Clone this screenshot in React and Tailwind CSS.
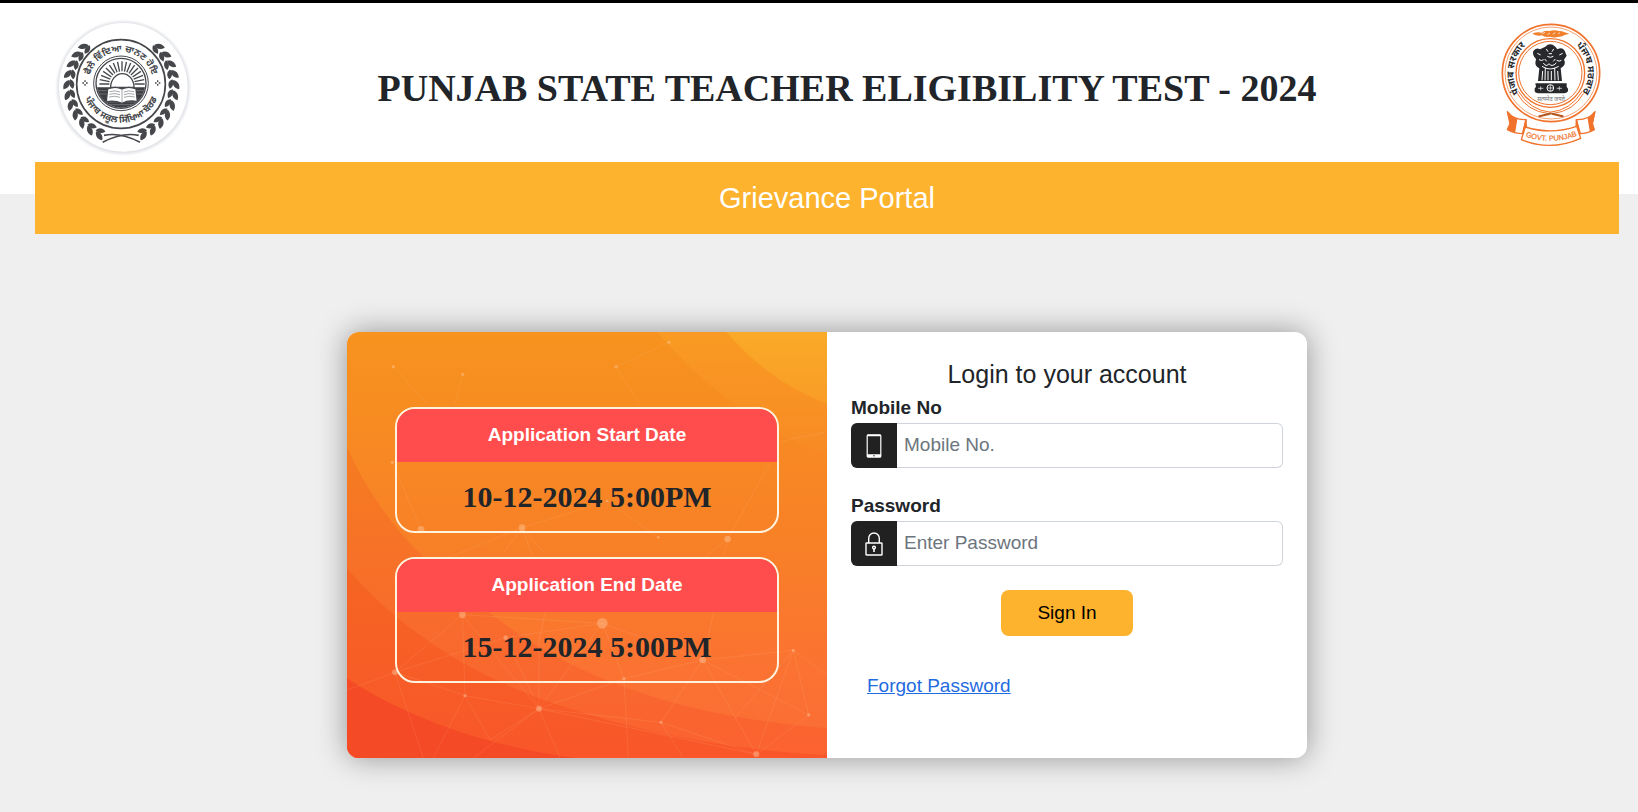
const LEAF = "M0 0c-11-5-15-17-6-29c10 7 13 18 6 29z";

const rays = Array.from({ length: 17 }, (_, i) => 180 + i * 11.25);

const leftLeaves = Array.from({ length: 11 }, (_, i) => 119 + i * 11.2);

const dots = [
    [160, 140, 5], [368, 163, 5], [828, 140, 5], [987, 67, 5], [157, 427, 5],
    [243, 628, 10], [546, 623, 10], [955, 652, 4], [1163, 657, 10], [367, 884, 10],
    [787, 910, 16], [165, 1057, 9], [375, 1127, 5], [597, 1166, 9], [852, 1076, 5],
    [1088, 1020, 10], [1360, 991, 5], [1406, 1185, 5], [963, 1207, 5], [1249, 1303, 9],
    [802, 543, 4], [497, 953, 7],
];

const webs = [
    "M160 140L260 250M368 163L345 250M828 140L987 67M828 140L900 255",
    "M157 427L243 628M546 623L802 543L955 652M546 623L320 715M546 623L490 700M546 623L615 700M546 623L580 715",
    "M1163 657L1090 715M1163 657L1150 715M1163 657L1290 430M1461 335L1320 365",
    "M367 884L787 910L1088 1020L1360 991L1406 1185L1088 1020L852 1076L597 1166L963 1207L1088 1020",
    "M367 884L165 1057L375 1127L597 1166L597 960L615 880M497 953L165 1057M497 953L597 1166L400 1314",
    "M367 884L597 1166M787 910L852 1076L865 1314M787 910L597 1166L660 1314M787 910L497 953M1088 1020L1120 880",
    "M1088 1020L1249 1303L963 1207L1030 1314M1360 991L1249 1303L1406 1185M1360 991L1461 1065M1360 991L1180 1200",
    "M597 1166L1249 1303M375 1127L280 1314M375 1127L450 1260L597 1166M165 1057L250 1314M165 1057L21 1110M367 884L375 1127",
];

function BoardEmblem() {
    return (
        <svg viewBox="46 54 414 414" className="w-[138px]" role="img" aria-label="Punjab School Education Board">
            <defs>
                <path id="board-top" d="M154 280A97 97 0 1 1 340 280" />
                <path id="board-bottom" d="M132 230A117 117 0 1 0 362 230" />
                <radialGradient id="board-edge">
                    <stop offset="0.94" stopColor="#dfe1e5" />
                    <stop offset="1" stopColor="#ffffff" />
                </radialGradient>
                <clipPath id="board-disc">
                    <circle cx="247" cy="250" r="73" />
                </clipPath>
            </defs>
            <circle cx="254" cy="263" r="205" fill="url(#board-edge)" />
            <circle cx="254" cy="262" r="193" fill="#fff" />
            <g fill="none" stroke="#45474b">
                <circle cx="247" cy="252" r="133" strokeWidth="5" />
                <circle cx="247" cy="250" r="82" strokeWidth="3" />
                <circle cx="247" cy="250" r="75" strokeWidth="4" />
            </g>
            <g clipPath="url(#board-disc)">
                <g stroke="#45474b" strokeWidth="4">
                    {rays.map((a) => (
                        <path key={a} d="M38 0H68" transform={`translate(250 252) rotate(${a})`} />
                    ))}
                </g>
                <path d="M170 262H325V330H170z" fill="#3c3e42" />
                <path d="M176 272H322M176 282H322M180 306H316M186 314H310" stroke="#85878a" strokeWidth="2" />
                <path d="M216 262a34 40 0 0 1 70 0z" fill="#fff" stroke="#45474b" strokeWidth="4" />
                <path d="M207 267q24-10 43 0q20-10 42 0l4 38q-25-6-46 5q-22-10-47-5z" fill="#fff" stroke="#45474b" strokeWidth="4" />
                <path d="M250 267v43M213 275q18-5 31 1M212 283q18-5 32 1M211 291q18-5 33 1M256 276q14-6 30-1M256 284q14-6 31-1M256 292q14-6 32-1" fill="none" stroke="#77797d" strokeWidth="2" />
            </g>
            {[1, -1].map((side) => (
                <g key={side} transform={side === 1 ? undefined : "translate(496 0) scale(-1 1)"} fill="#45474b">
                    <path d="M192 427Q250 396 300 406" fill="none" stroke="#45474b" strokeWidth="5" />
                    {leftLeaves.map((a) => (
                        <g key={a} transform={`translate(248 257) rotate(${a}) translate(157 0)`}>
                            <path d={LEAF} transform="rotate(38) scale(1.1)" />
                            <path d={LEAF} transform="rotate(-10) translate(-3 2)" />
                        </g>
                    ))}
                </g>
            ))}
            <g fill="#45474b" fontSize="28" fontWeight="700" fontFamily="'Noto Sans Gurmukhi', 'Noto Sans', sans-serif" textAnchor="middle">
                <text><textPath href="#board-top" startOffset="50%">ਫੈਲੇ ਵਿੱਦਿਆ ਚਾਨਣ ਹੋਇ</textPath></text>
                <text><textPath href="#board-bottom" startOffset="50%">ਪੰਜਾਬ ਸਕੂਲ ਸਿੱਖਿਆ ਬੋਰਡ</textPath></text>
            </g>
            <path d="M139 241v5M139 252v5M131 249h5M142 249h5M357 241v5M357 252v5M349 249h5M360 249h5" stroke="#45474b" strokeWidth="4" />
        </svg>
    );
}

function StateEmblem() {
    return (
        <svg viewBox="60 66 306 380" className="w-[102px]" role="img" aria-label="Government of Punjab">
            <defs>
                <path id="state-left" d="M141 307A111 111 0 0 1 165 121" />
                <path id="state-right" d="M259 121A111 111 0 0 1 283 307" />
                <path id="state-ribbon" d="M136 412Q213 440 292 410" />
            </defs>
            <g fill="none" stroke="#f0722b">
                <circle cx="213" cy="222" r="146" strokeWidth="5" />
                <circle cx="213" cy="222" r="138" strokeWidth="2" />
                <circle cx="211" cy="222" r="103" strokeWidth="4" />
                <circle cx="211" cy="222" r="95" strokeWidth="3" />
            </g>
            <g fill="#f0802b">
                <path d="M157 104q12-6 28-3q8-8 24-5q14-5 28 0q10 0 17 4l14 4l-14 4q-8 6-18 5q-14 5-26 0q-16 3-24-4q-14 4-29-5z" />
                <path d="M186 104l9-4M202 107l8-5M218 106l8-5M234 105l6-4" stroke="#fff" strokeWidth="2" />
            </g>
            <g fill="none" stroke="#f0722b" strokeLinecap="round">
                <path d="M112 284Q140 336 205 344M116 278Q150 334 212 340" strokeWidth="3" />
                <path d="M310 284Q282 336 218 344M306 278Q272 334 210 340" strokeWidth="3" />
                <path d="M178 352l32-8M216 344l32 8" stroke="#b3561f" strokeWidth="6" />
            </g>
            <g fill="#26282b">
                <path d="M196 143q14-14 30 0l6 8q14-8 22 4l6 15l-8 12q6 10-2 20l-8 6l4 38h-72l4-38q-12-6-12-16l2-12q-12-12-8-24q8-12 20-5z" />
                <path d="M166 253h94v10q6 5 4 14q-4 6-12 6h-76q-12-2-12-8q-2-8 4-12z" />
            </g>
            <g fill="none" stroke="#fff" strokeWidth="3">
                <path d="M199 150l5 8M221 150l-5 8M206 164h10M202 172q9 6 18 0M172 163l10 5M248 163l-10 5M177 182q8 5 14 0M230 184q8 5 14 0" />
                <path d="M188 216l-2 28M196 206l-1 38M204 216v28M214 216v28M224 206l1 38M233 216l2 28M190 192q9 14 17 2q8 12 22-2M186 202q24 16 50 0M194 180l6 7M226 180l-6 7" />
                <circle cx="211" cy="267" r="10" />
                <path d="M211 258v18M202 267h18M182 262v12M190 268h-16M238 262v12M230 268h16" strokeWidth="2" />
            </g>
            <text x="213" y="305" textAnchor="middle" fontSize="17" fill="#6d6f72" fontFamily="'Noto Sans Devanagari', 'Noto Sans', sans-serif">सत्यमेव जयते</text>
            <g fill="#26282b" fontSize="29" fontWeight="700" textAnchor="middle">
                <text fontFamily="'Noto Sans Devanagari', 'Noto Sans', sans-serif">
                    <textPath href="#state-left" startOffset="50%">पंजाब सरकार</textPath>
                </text>
                <text fontFamily="'Noto Sans Gurmukhi', 'Noto Sans', sans-serif">
                    <textPath href="#state-right" startOffset="50%">ਪੰਜਾਬ ਸਰਕਾਰ</textPath>
                </text>
            </g>
            <g fill="#fff" stroke="#f0722b" strokeWidth="4" strokeLinejoin="round">
                <path d="M82 338q20 26 56 24l-10 42q-24 0-46-12l8-18z" />
                <path d="M345 338q-20 26-56 24l10 42q24 0 44-12l-6-18z" />
                <path d="M84 342q10 14 26 18l-6 38q-12-2-20-8l8-18zM343 342q-8 12-18 16l6 38l10-5l-4-18z" fill="#f0722b" />
                <path d="M138 362l-10 42l12 8zM289 362l12 42l-14 8z" fill="#f0722b" />
                <path d="M136 384Q213 408 290 382L302 418Q213 458 124 422z" />
            </g>
            <text fontSize="22" fill="#f0722b" stroke="#f0722b" strokeWidth="0.6" fontFamily="'Liberation Sans', sans-serif" textAnchor="middle">
                <textPath href="#state-ribbon" startOffset="50%">GOVT. PUNJAB</textPath>
            </text>
        </svg>
    );
}

function PanelArt() {
    return (
        <svg viewBox="21 36 1440 1278" preserveAspectRatio="none" className="absolute inset-0 h-full w-full" aria-hidden="true">
            <defs>
                <linearGradient id="art-base" x1="0" y1="0" x2="0" y2="1">
                    <stop offset="0" stopColor="#f7931e" />
                    <stop offset="0.5" stopColor="#f88027" />
                    <stop offset="0.8" stopColor="#fb7232" />
                    <stop offset="1" stopColor="#fb6c35" />
                </linearGradient>
                <linearGradient id="art-corner" x1="0" y1="0" x2="0" y2="1">
                    <stop offset="0" stopColor="#f99b22" />
                    <stop offset="1" stopColor="#f88a25" />
                </linearGradient>
                <linearGradient id="art-yellow" x1="0" y1="0" x2="0" y2="1">
                    <stop offset="0" stopColor="#faaa28" />
                    <stop offset="1" stopColor="#f99c26" />
                </linearGradient>
                <linearGradient id="art-one" x1="0" y1="0" x2="0" y2="1">
                    <stop offset="0" stopColor="#f57c20" />
                    <stop offset="0.6" stopColor="#f86a2d" />
                    <stop offset="1" stopColor="#fb6230" />
                </linearGradient>
                <linearGradient id="art-two" x1="0" y1="0" x2="0" y2="1">
                    <stop offset="0" stopColor="#f56522" />
                    <stop offset="1" stopColor="#f9562a" />
                </linearGradient>
            </defs>
            <path d="M21 36H1461V1314H21z" fill="url(#art-base)" />
            <path d="M950 36C1070 170 1240 330 1461 402V36z" fill="url(#art-corner)" />
            <path d="M1160 36C1240 130 1340 205 1461 252V36z" fill="url(#art-yellow)" />
            <path d="M21 382C120 600 260 740 450 880C720 1090 1050 1190 1461 1225V1314H21z" fill="url(#art-one)" />
            <path d="M21 745C170 920 380 1060 640 1150C900 1240 1180 1290 1461 1306V1314H21z" fill="url(#art-two)" />
            <path d="M21 1075C180 1180 400 1270 700 1314H21z" fill="#f54a26" />
            <g fill="none" stroke="#ffc9a0" strokeOpacity="0.13" strokeWidth="3">
                {webs.map((d) => (
                    <path key={d} d={d} />
                ))}
            </g>
            <g fill="#ffd0a8" fillOpacity="0.4">
                {dots.map(([x, y, r]) => (
                    <circle key={`${x}-${y}`} cx={x} cy={y} r={r} />
                ))}
            </g>
        </svg>
    );
}

function DateCard({ title, date }) {
    return (
        <div className="relative w-4/5 overflow-hidden rounded-[20px] border-2 border-[#fdf3df] text-center font-bold">
            <h3 className="bg-[#ff4d4d] pb-3.5 pt-3 text-[19px] leading-[27px] text-white">{title}</h3>
            <p className="p-3 font-['Liberation_Serif',serif] text-[30px] leading-[45px]">{date}</p>
        </div>
    );
}

function Field({ id, label, type, placeholder, icon }) {
    return (
        <div className="mb-[22px]">
            <label htmlFor={id} className="block font-bold leading-[31px]">{label}</label>
            <div className="flex h-[45px]">
                <span className="flex w-[46px] shrink-0 items-center justify-center rounded-l-md bg-[#212121]">{icon}</span>
                <input
                    id={id}
                    type={type}
                    placeholder={placeholder}
                    className="w-full min-w-0 rounded-r-md border border-l-0 border-[#ced4da] px-[7px] placeholder:text-[#6c757d] focus:outline-none"
                />
            </div>
        </div>
    );
}

const phoneIcon = (
    <svg viewBox="0 0 16 24" className="h-6 w-4" fill="none" stroke="#fff" aria-hidden="true">
        <rect x="1.2" y="0.8" width="13.6" height="22.4" rx="1" strokeWidth="1.2" />
        <path d="M1 1.5h14" strokeWidth="1.4" />
        <path d="M1 21.7h14" strokeWidth="2.8" />
        <circle cx="8" cy="21.7" r="0.7" fill="#212121" stroke="none" />
    </svg>
);

const lockIcon = (
    <svg viewBox="0 0 18 24" className="h-6 w-[18px]" fill="none" stroke="#fff" strokeWidth="1.4" aria-hidden="true">
        <rect x="1" y="11" width="16" height="12" rx="0.6" />
        <path d="M3.7 11V6.3a5.3 5.3 0 0 1 10.6 0V11" />
        <circle cx="9" cy="15.6" r="1.4" />
        <path d="M9 17v3" strokeWidth="1.6" />
    </svg>
);

export default function App() {
    return (
        <div className="min-h-screen bg-[#efefef] font-['Liberation_Sans',Arial,sans-serif] text-[19px] text-[#212529]">
            <header className="flex flex-col border-t-[3px] border-black bg-white pl-[35px] pr-[19px]">
                <div className="flex h-[159px] items-center">
                    <div className="flex w-44 shrink-0 justify-center pt-2">
                        <BoardEmblem />
                    </div>
                    <h1 className="grow pt-3 text-center font-['Liberation_Serif',serif] text-[38px] font-bold">
                        PUNJAB STATE TEACHER ELIGIBILITY TEST - 2024
                    </h1>
                    <div className="flex w-34 shrink-0 justify-center pt-1">
                        <StateEmblem />
                    </div>
                </div>
                <h2 className="-mb-10 flex h-[72px] items-center justify-center bg-[#fdb32d] pt-0.5 text-[29px] text-white">
                    Grievance Portal
                </h2>
            </header>

            <main className="px-4 pb-[54px] pt-[138px]">
                <div className="mx-auto grid min-h-[426px] w-full max-w-[960px] translate-x-2 grid-cols-2 overflow-hidden rounded-xl bg-white shadow-[0_0_30px_rgba(0,0,0,0.38)]">
                    <section className="relative flex flex-col items-center justify-center gap-6">
                        <PanelArt />
                        <DateCard title="Application Start Date" date="10-12-2024 5:00PM" />
                        <DateCard title="Application End Date" date="15-12-2024 5:00PM" />
                    </section>

                    <form className="px-6 pt-6">
                        <h2 className="text-center text-[25px] leading-[36px]">Login to your account</h2>
                        <Field id="mobile" label="Mobile No" type="tel" placeholder="Mobile No." icon={phoneIcon} />
                        <Field id="password" label="Password" type="password" placeholder="Enter Password" icon={lockIcon} />
                        <button type="button" className="mx-auto mt-6 block h-[46px] w-[132px] rounded-lg bg-[#fdb32d] text-black">
                            Sign In
                        </button>
                        <a href="#forgot" className="ml-4 mt-9 inline-block text-[#1f6be0] underline">Forgot Password</a>
                    </form>
                </div>
            </main>
        </div>
    );
}
